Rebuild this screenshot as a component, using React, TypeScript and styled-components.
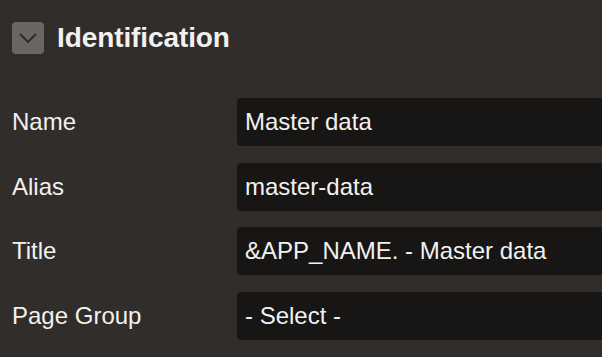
import styled, { createGlobalStyle } from "styled-components";

const GlobalStyle = createGlobalStyle`
  html, body {
    margin: 0;
    padding: 0;
    background-color: #312d2a;
    overflow: hidden;
  }
  body {
    font-family: "Liberation Sans", Arial, sans-serif;
    color: #f2f1f0;
  }
`;

const fields = [
  { label: "Name", value: "Master data" },
  { label: "Alias", value: "master-data" },
  { label: "Title", value: "&APP_NAME. - Master data" },
  { label: "Page Group", value: "- Select -" },
];

function App() {
  return (
    <>
      <GlobalStyle />
      <Panel>
        <Header>
          <CollapseButton>
            <svg width="18" height="10" viewBox="0 0 18 10" fill="none">
              <path d="M1 1 L9 9 L17 1" stroke="#302c29" strokeWidth="2" />
            </svg>
          </CollapseButton>
          <HeaderTitle>Identification</HeaderTitle>
        </Header>
        <Fields>
          {fields.map((f) => (
            <FieldRow key={f.label}>
              <FieldLabel>{f.label}</FieldLabel>
              <FieldInput>{f.value}</FieldInput>
            </FieldRow>
          ))}
        </Fields>
      </Panel>
    </>
  );
}

export default App;

const Panel = styled.div`
  width: 602px;
  height: 357px;
  padding: 22px 0 0 12px;
  box-sizing: border-box;
`;

const Header = styled.div`
  display: flex;
  align-items: center;
  gap: 13px;
  height: 32px;
`;

const CollapseButton = styled.div`
  width: 32px;
  height: 32px;
  border-radius: 4px;
  background-color: #6b6663;
  display: flex;
  align-items: center;
  justify-content: center;
  flex-shrink: 0;
`;

const HeaderTitle = styled.h2`
  margin: 0;
  font-size: 28px;
  font-weight: 700;
  letter-spacing: -0.1px;
`;

const Fields = styled.div`
  display: flex;
  flex-direction: column;
  gap: 16.5px;
  margin-top: 44px;
`;

const FieldRow = styled.div`
  display: grid;
  grid-template-columns: 225px 1fr;
  align-items: center;
  height: 48px;
`;

const FieldLabel = styled.div`
  font-size: 24px;
`;

const FieldInput = styled.div`
  height: 48px;
  display: flex;
  align-items: center;
  padding-left: 8px;
  border-radius: 4px 0 0 4px;
  background-color: #171614;
  font-size: 24px;
  white-space: nowrap;
  overflow: hidden;
`;
